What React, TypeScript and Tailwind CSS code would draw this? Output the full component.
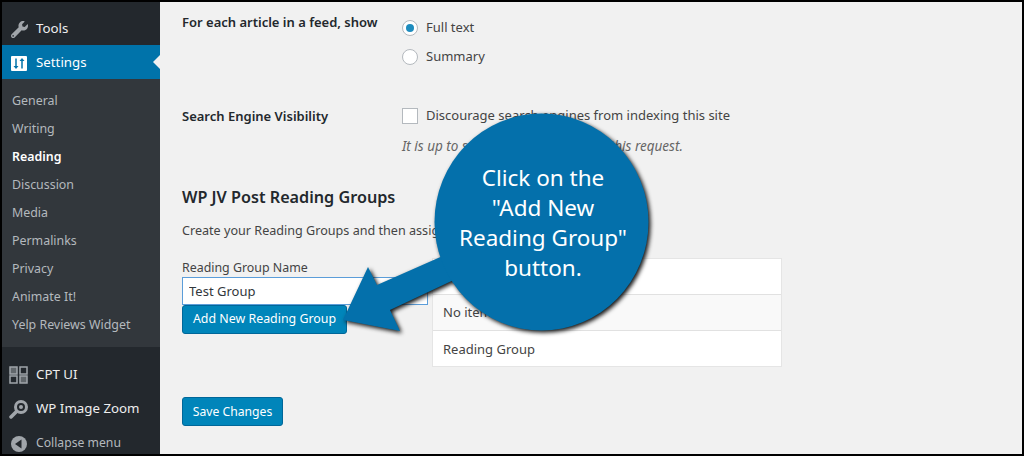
import { FaWrench } from 'react-icons/fa';

const subItems = ['General', 'Writing', 'Reading', 'Discussion', 'Media', 'Permalinks', 'Privacy', 'Animate It!', 'Yelp Reviews Widget'];

function SettingsIcon() {
  return (
    <svg width="16" height="15" viewBox="0 0 16 15">
      <rect width="16" height="15" rx="1" fill="#fff" />
      <path d="M5 2.5v8M11 4.5v8" stroke="#0073aa" strokeWidth="1.5" />
      <path d="M2.5 10h5L5 13zM8.5 5h5L11 2z" fill="#0073aa" />
    </svg>
  );
}

function GridIcon() {
  return (
    <svg width="20" height="18" viewBox="0 0 20 18" fill="none" stroke="#a0a5aa" strokeWidth="1.5">
      <rect x="1" y="1" width="7" height="7" fill="#a0a5aa" fillOpacity="0.5" />
      <rect x="11" y="1" width="7" height="7" />
      <rect x="1" y="10" width="7" height="7" />
      <rect x="11" y="10" width="7" height="7" fill="#a0a5aa" fillOpacity="0.5" />
    </svg>
  );
}

function ZoomIcon() {
  return (
    <svg width="20" height="20" viewBox="0 0 20 20">
      <path d="M8 12L2 18" stroke="#a0a5aa" strokeWidth="3.5" strokeLinecap="round" />
      <circle cx="12" cy="8" r="5.5" fill="#23282d" stroke="#a0a5aa" strokeWidth="3" />
      <circle cx="12" cy="8" r="2" fill="#a0a5aa" />
    </svg>
  );
}

function CollapseIcon() {
  return (
    <svg width="16" height="16" viewBox="0 0 16 16">
      <circle cx="8" cy="8" r="8" fill="#a0a5aa" />
      <path d="M10.5 3.5v9L4 8z" fill="#23282d" />
    </svg>
  );
}

function MenuRow({ icon, label }: { icon: React.ReactNode; label: string }) {
  return (
    <div className="flex h-[34px] items-center pt-[2px] text-[13.3px] text-[#eeeeee]">
      <div className="flex w-[34px] justify-center">{icon}</div>
      <span>{label}</span>
    </div>
  );
}

function Callout() {
  return (
    <div className="absolute left-[-2px] top-[-2px] h-[456px] w-[1024px]">
      <svg width="1024" height="456" viewBox="0 0 1024 456" className="drop-shadow-[2px_2px_2px_#111]">
        <path d="M343 320L368 267L377 285L445 255L458 278L390 310L400 331Z" fill="#0470ab" />
        <ellipse cx="541.5" cy="222" rx="107" ry="108.5" fill="#0470ab" />
      </svg>
      <div className="absolute left-[435px] top-[163px] w-[216px] text-center text-[22.5px] leading-[30px] text-white">
        <p>Click on the</p>
        <p>"Add New</p>
        <p>Reading Group"</p>
        <p>button.</p>
      </div>
    </div>
  );
}

export default function App() {
  return (
    <div className="relative flex h-[456px] w-[1024px] overflow-hidden border-2 border-black bg-[#f1f1f1] font-['Noto_Sans','Open_Sans',sans-serif] text-[13px] text-[#444444]">
      {/* Admin sidebar */}
      <aside className="h-[452px] w-[158px] shrink-0 overflow-hidden bg-[#23282d] pt-[9px]">
        <MenuRow icon={<FaWrench size={17} color="#a0a5aa" />} label="Tools" />
        <div className="relative flex h-[34px] items-center bg-[#0073aa] pt-[2px] text-[13.3px] text-white">
          <div className="flex w-[34px] justify-center">
            <SettingsIcon />
          </div>
          <span>Settings</span>
          <div className="absolute right-0 top-[10px] h-0 w-0 border-y-[7px] border-r-[7px] border-y-transparent border-r-[#f1f1f1]" />
        </div>
        <div className="bg-[#32373c] pb-[8px] pt-[8px] text-[12.4px]">
          {subItems.map((item) => (
            <div
              key={item}
              className={`flex h-[28px] items-center pl-[10px] ${item === 'Reading' ? 'font-semibold text-white' : 'text-[#b4b9be]'}`}
            >
              {item}
            </div>
          ))}
        </div>
        <div className="pt-[10px]">
          <MenuRow icon={<GridIcon />} label="CPT UI" />
          <MenuRow icon={<ZoomIcon />} label="WP Image Zoom" />
          <div className="flex h-[34px] items-center pt-[3px] text-[12.2px] text-[#b4b9be]">
            <div className="flex w-[34px] justify-center">
              <CollapseIcon />
            </div>
            <span>Collapse menu</span>
          </div>
        </div>
      </aside>

      {/* Reading settings */}
      <main className="flex-1 pl-[22px]">
        <div className="flex h-[92px] pt-[11px]">
          <div className="w-[220px] font-semibold text-[#23282d]">For each article in a feed, show</div>
          <div className="flex flex-col gap-[9px] pt-[5px]">
            <label className="flex h-[20px] items-center gap-[8px]">
              <span className="flex h-[16px] w-[16px] items-center justify-center rounded-full border border-[#b4b9be] bg-white">
                <span className="h-[8px] w-[8px] rounded-full bg-[#1e8cbe]" />
              </span>
              Full text
            </label>
            <label className="flex h-[20px] items-center gap-[8px]">
              <span className="h-[16px] w-[16px] rounded-full border border-[#b4b9be] bg-white" />
              Summary
            </label>
          </div>
        </div>
        <div className="flex h-[70px] pt-[12px]">
          <div className="w-[220px] pt-[1px] font-semibold text-[#23282d]">Search Engine Visibility</div>
          <div>
            <label className="flex h-[20px] items-center gap-[8px]">
              <span className="h-[16px] w-[16px] border border-[#b4b9be] bg-white" />
              Discourage search engines from indexing this site
            </label>
            <p className="mt-[10px] text-[13.5px] italic text-[#666666]">It is up to search engines to honor this request.</p>
          </div>
        </div>
        <h2 className="mt-[21px] text-[16.2px] font-semibold leading-[24px] text-[#23282d]">WP JV Post Reading Groups</h2>
        <p className="mt-[12px] text-[12.6px] leading-[20px]">Create your Reading Groups and then assign posts to them.</p>
        <div className="mt-[17px] flex">
          <div className="w-[250px]">
            <div className="text-[12.4px] leading-[19px]">Reading Group Name</div>
            <input
              readOnly
              value="Test Group"
              className="block h-[28px] w-[246px] border border-[#5b9dd9] bg-white px-[6px] text-[13px] text-[#32373c] outline-none"
            />
            <button className="block h-[29px] w-[165px] rounded-[3px] border border-[#006799] bg-[#0085ba] text-center text-[12.4px] text-white">
              Add New Reading Group
            </button>
          </div>
          <div className="h-[109px] w-[350px] border border-[#e5e5e5] bg-white">
            <div className="h-[36px] border-b border-[#e1e1e1]" />
            <div className="flex h-[36px] items-center border-b border-[#e1e1e1] bg-[#f9f9f9] pl-[10px]">No items found.</div>
            <div className="flex h-[35px] items-center pl-[10px] pt-[2px]">Reading Group</div>
          </div>
        </div>
        <button className="mt-[30px] block h-[29px] w-[101px] rounded-[3px] border border-[#006799] bg-[#0085ba] pt-[1px] text-[12.2px] text-white">
          Save Changes
        </button>
      </main>

      <Callout />
    </div>
  );
}
